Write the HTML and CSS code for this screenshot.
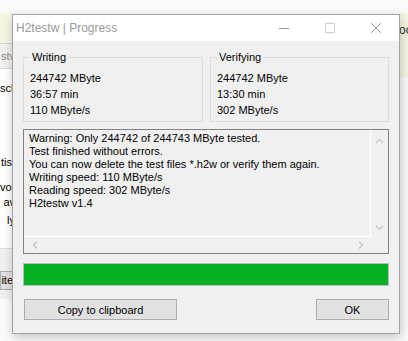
FILE: index.html
```html
<!DOCTYPE html>
<html lang="en">
<head>
  <meta charset="UTF-8" />
  <title>H2testw | Progress</title>
  <link rel="stylesheet" href="styles.css">
</head>
<body>
  <div class="desk">
    <!-- main window behind, mostly hidden -->
    <div class="back-left">
      <div class="bl-cap"></div>
      <div class="bl-tab">stv</div>
      <div class="bl-list">
        <div class="bl-item one">sch</div>
        <div class="bl-item two">t</div>
        <div class="bl-item three">tist</div>
        <div class="bl-item four">volu</div>
        <div class="bl-item">av</div>
        <div class="bl-item five">ly</div>
      </div>
      <div class="bl-foot"><span class="bl-btn">ite</span></div>
    </div>
    <div class="back-right">
      <div class="br-cap">oc</div>
    </div>

    <div class="dialog">
      <div class="titlebar">
        <span class="title">H2testw | Progress</span>
        <div class="controls">
          <svg class="ctl" width="46" height="26" viewBox="0 0 46 26"><line x1="18" y1="13.5" x2="28" y2="13.5" stroke="#9a9a9a" stroke-width="1"/></svg>
          <svg class="ctl" width="46" height="26" viewBox="0 0 46 26"><rect x="18.5" y="8.5" width="9" height="9" fill="none" stroke="#cfcfcf" stroke-width="1"/></svg>
          <svg class="ctl" width="46" height="26" viewBox="0 0 46 26"><path d="M18 8 L28 18 M28 8 L18 18" stroke="#9a9a9a" stroke-width="1"/></svg>
        </div>
      </div>

      <div class="body">
        <div class="groups">
          <fieldset class="group">
            <legend>Writing</legend>
            <div>244742 MByte</div>
            <div>36:57 min</div>
            <div>110 MByte/s</div>
          </fieldset>
          <fieldset class="group">
            <legend>Verifying</legend>
            <div>244742 MByte</div>
            <div>13:30 min</div>
            <div>302 MByte/s</div>
          </fieldset>
        </div>

        <div class="log">
          <div class="log-text">
            <div>Warning: Only 244742 of 244743 MByte tested.</div>
            <div>Test finished without errors.</div>
            <div>You can now delete the test files *.h2w or verify them again.</div>
            <div>Writing speed: 110 MByte/s</div>
            <div>Reading speed: 302 MByte/s</div>
            <div>H2testw v1.4</div>
          </div>
          <div class="vscroll">
            <svg width="17" height="14" viewBox="0 0 17 14"><polyline points="5,10 8.5,6.5 12,10" fill="none" stroke="#c4c4c4" stroke-width="1.2"/></svg>
            <svg width="17" height="14" viewBox="0 0 17 14"><polyline points="5,4 8.5,7.5 12,4" fill="none" stroke="#c4c4c4" stroke-width="1.2"/></svg>
          </div>
          <div class="hscroll">
            <svg width="16" height="16" viewBox="0 0 16 16"><polyline points="10,4.5 6.5,8 10,11.5" fill="none" stroke="#c4c4c4" stroke-width="1.2"/></svg>
            <svg width="16" height="16" viewBox="0 0 16 16"><polyline points="6,4.5 9.5,8 6,11.5" fill="none" stroke="#c4c4c4" stroke-width="1.2"/></svg>
          </div>
          <div class="corner"></div>
        </div>

        <div class="progress"><div class="fill" style="width:100%"></div></div>

        <div class="buttons">
          <button class="btn copy">Copy to clipboard</button>
          <button class="btn ok">OK</button>
        </div>
      </div>
    </div>
  </div>
</body>
</html>
```

FILE: styles.css
```css
body { margin: 0; background: #fafafa; font-family: "Liberation Sans", Arial, sans-serif; font-size: 11px; color: #000; }
.desk { position: relative; width: 408px; height: 341px; overflow: hidden; }

/* background window pieces */
.back-left { position: absolute; left: 0; top: 13px; width: 15px; height: 286px; background: #fff; display: flex; flex-direction: column; }
.bl-cap { height: 30px; background: #f7f5e4; border-bottom: 1px solid #d4d4d4; }
.bl-tab { height: 24px; line-height: 24px; background: #f0f0f0; border-bottom: 1px solid #d9d9d9; color: #8a8a8a; text-align: right; white-space: nowrap; }
.bl-list { flex: 1; padding-top: 12px; }
.bl-item { height: 15px; line-height: 15px; text-align: right; white-space: nowrap; }
.bl-item.two { margin-top: 9px; }
.bl-item.three { margin-top: 35px; }
.bl-item.four { margin-top: 10px; }
.bl-item.five { margin-top: 3px; }
.bl-foot { height: 50px; background: #f0f0f0; border-top: 1px solid #dcdcdc; display: flex; align-items: center; justify-content: flex-end; }
.bl-btn { display: block; margin-top: 12px; padding: 3px 2px 3px 0; background: #e1e1e1; border: 1px solid #adadad; border-right: none; line-height: 11px; white-space: nowrap; }
.back-right { position: absolute; left: 398px; top: 13px; width: 10px; height: 64px; background: #f7f5e4; }
.br-cap { padding: 10px 0 0 1px; font-size: 12px; color: #333; white-space: nowrap; overflow: hidden; }

/* dialog */
.dialog { position: absolute; left: 12px; top: 14px; width: 386px; background: #f0f0f0; border: 1px solid #a3a3a3; box-shadow: 1px 3px 10px rgba(0,0,0,0.22); }
.titlebar { height: 26px; background: #fff; display: flex; align-items: center; justify-content: space-between; }
.title { padding-left: 3px; font-size: 12px; color: #9a9a9a; }
.controls { display: flex; }
.ctl { display: block; }

.body { padding: 10px 10px 13px; }
.groups { display: grid; grid-template-columns: 180px 1fr; gap: 7px; }
.group { margin: 0; padding: 6px 6px 3px; border: 1px solid #dcdcdc; min-width: 0; line-height: 16px; }
.group legend { padding: 0 2px; line-height: 13px; margin-left: 0; }

.log { margin-top: 7px; height: 123px; border: 1px solid #828282; display: grid; grid-template-columns: 1fr 17px; grid-template-rows: 1fr 16px; }
.log-text { padding: 2px 4px 0 5px; line-height: 13px; white-space: nowrap; overflow: hidden; border-right: 1px solid #fff; border-bottom: 1px solid #fff; }
.vscroll { display: flex; flex-direction: column; justify-content: space-between; padding: 3px 0 1px; }
.vscroll svg, .hscroll svg { display: block; }
.hscroll { display: flex; justify-content: space-between; padding: 0 2px 0 3px; }

.progress { margin-top: 9px; height: 21px; border: 1px solid #bcbcbc; background: #e6e6e6; }
.fill { height: 100%; background: #06b025; }

.buttons { margin-top: 13px; display: flex; justify-content: space-between; }
.btn { height: 21px; padding: 0; background: #e1e1e1; border: 1px solid #adadad; font-family: "Liberation Sans", Arial, sans-serif; font-size: 11px; color: #000; }
.copy { width: 153px; margin-left: 1px; }
.ok { width: 73px; }
```
